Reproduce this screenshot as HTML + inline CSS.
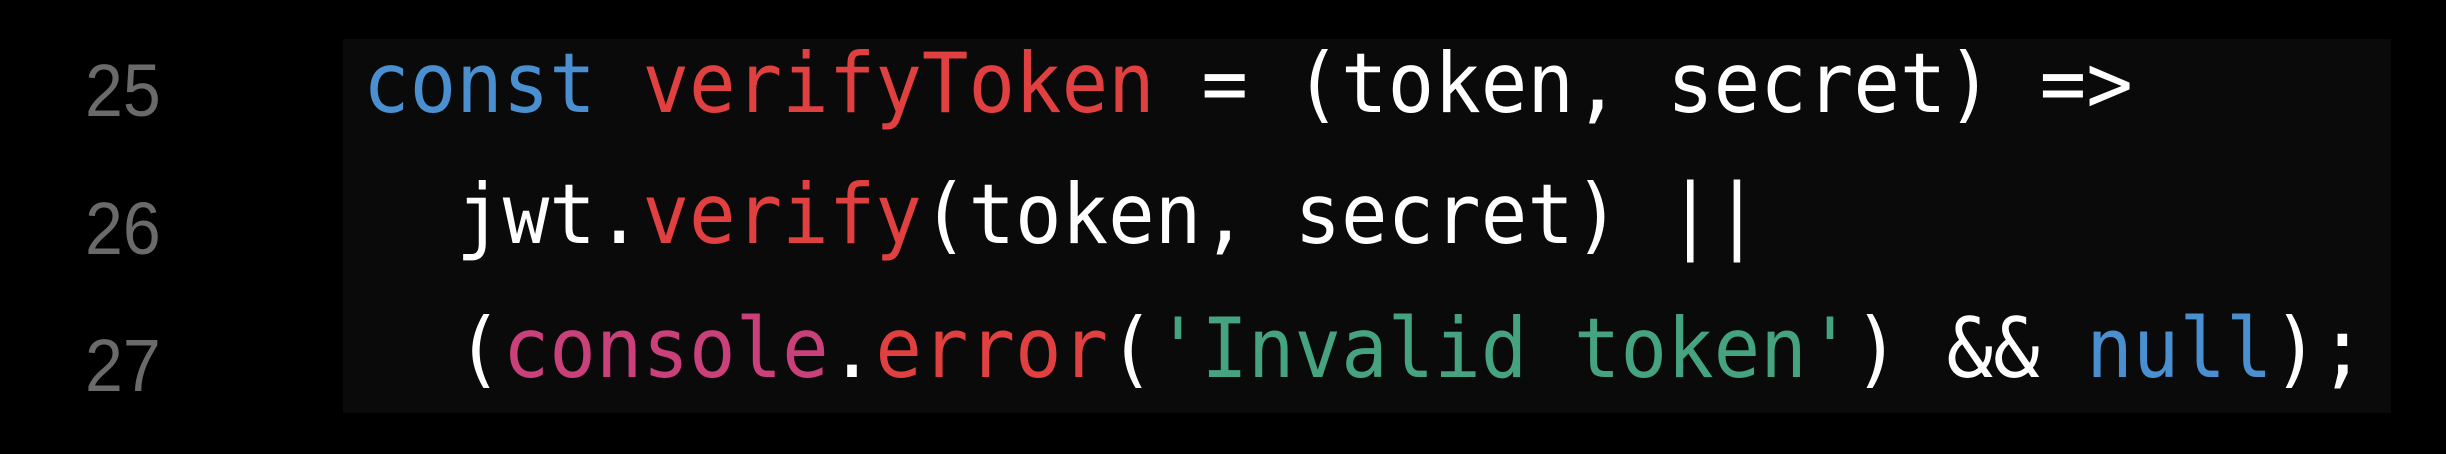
<!DOCTYPE html>
<html><head><meta charset="utf-8"><style>
html,body{margin:0;padding:0;background:#000;width:2446px;height:454px;overflow:hidden;position:relative}
.box{position:absolute;left:343px;top:39px;width:2048px;height:374px;background:#0a0a0a}
.n{position:absolute;left:85px;font-family:"Liberation Sans",sans-serif;font-size:74px;line-height:normal;color:#6a6a6a;transform:scaleX(0.92);transform-origin:left}
.c{position:absolute;left:363px;font-family:"DejaVu Sans Mono","Liberation Mono",monospace;font-size:83px;line-height:normal;color:#fff;white-space:pre;transform:scaleX(0.932);transform-origin:left}
.b{color:#4a90d0}.r{color:#e0403f}.p{color:#c9407a}.g{color:#45a37f}
</style></head><body>
<div class="box"></div>
<div class="n" style="top:48px">25</div>
<div class="n" style="top:186px">26</div>
<div class="n" style="top:323px">27</div>
<div class="c" style="top:35px"><span class="b">const</span> <span class="r">verifyToken</span> = (token, secret) =&gt;</div>
<div class="c" style="top:166px">  jwt.<span class="r">verify</span>(token, secret) ||</div>
<div class="c" style="top:300px">  (<span class="p">console</span>.<span class="r">error</span>(<span class="g">'Invalid token'</span>) &amp;&amp; <span class="b">null</span>);</div>
</body></html>
